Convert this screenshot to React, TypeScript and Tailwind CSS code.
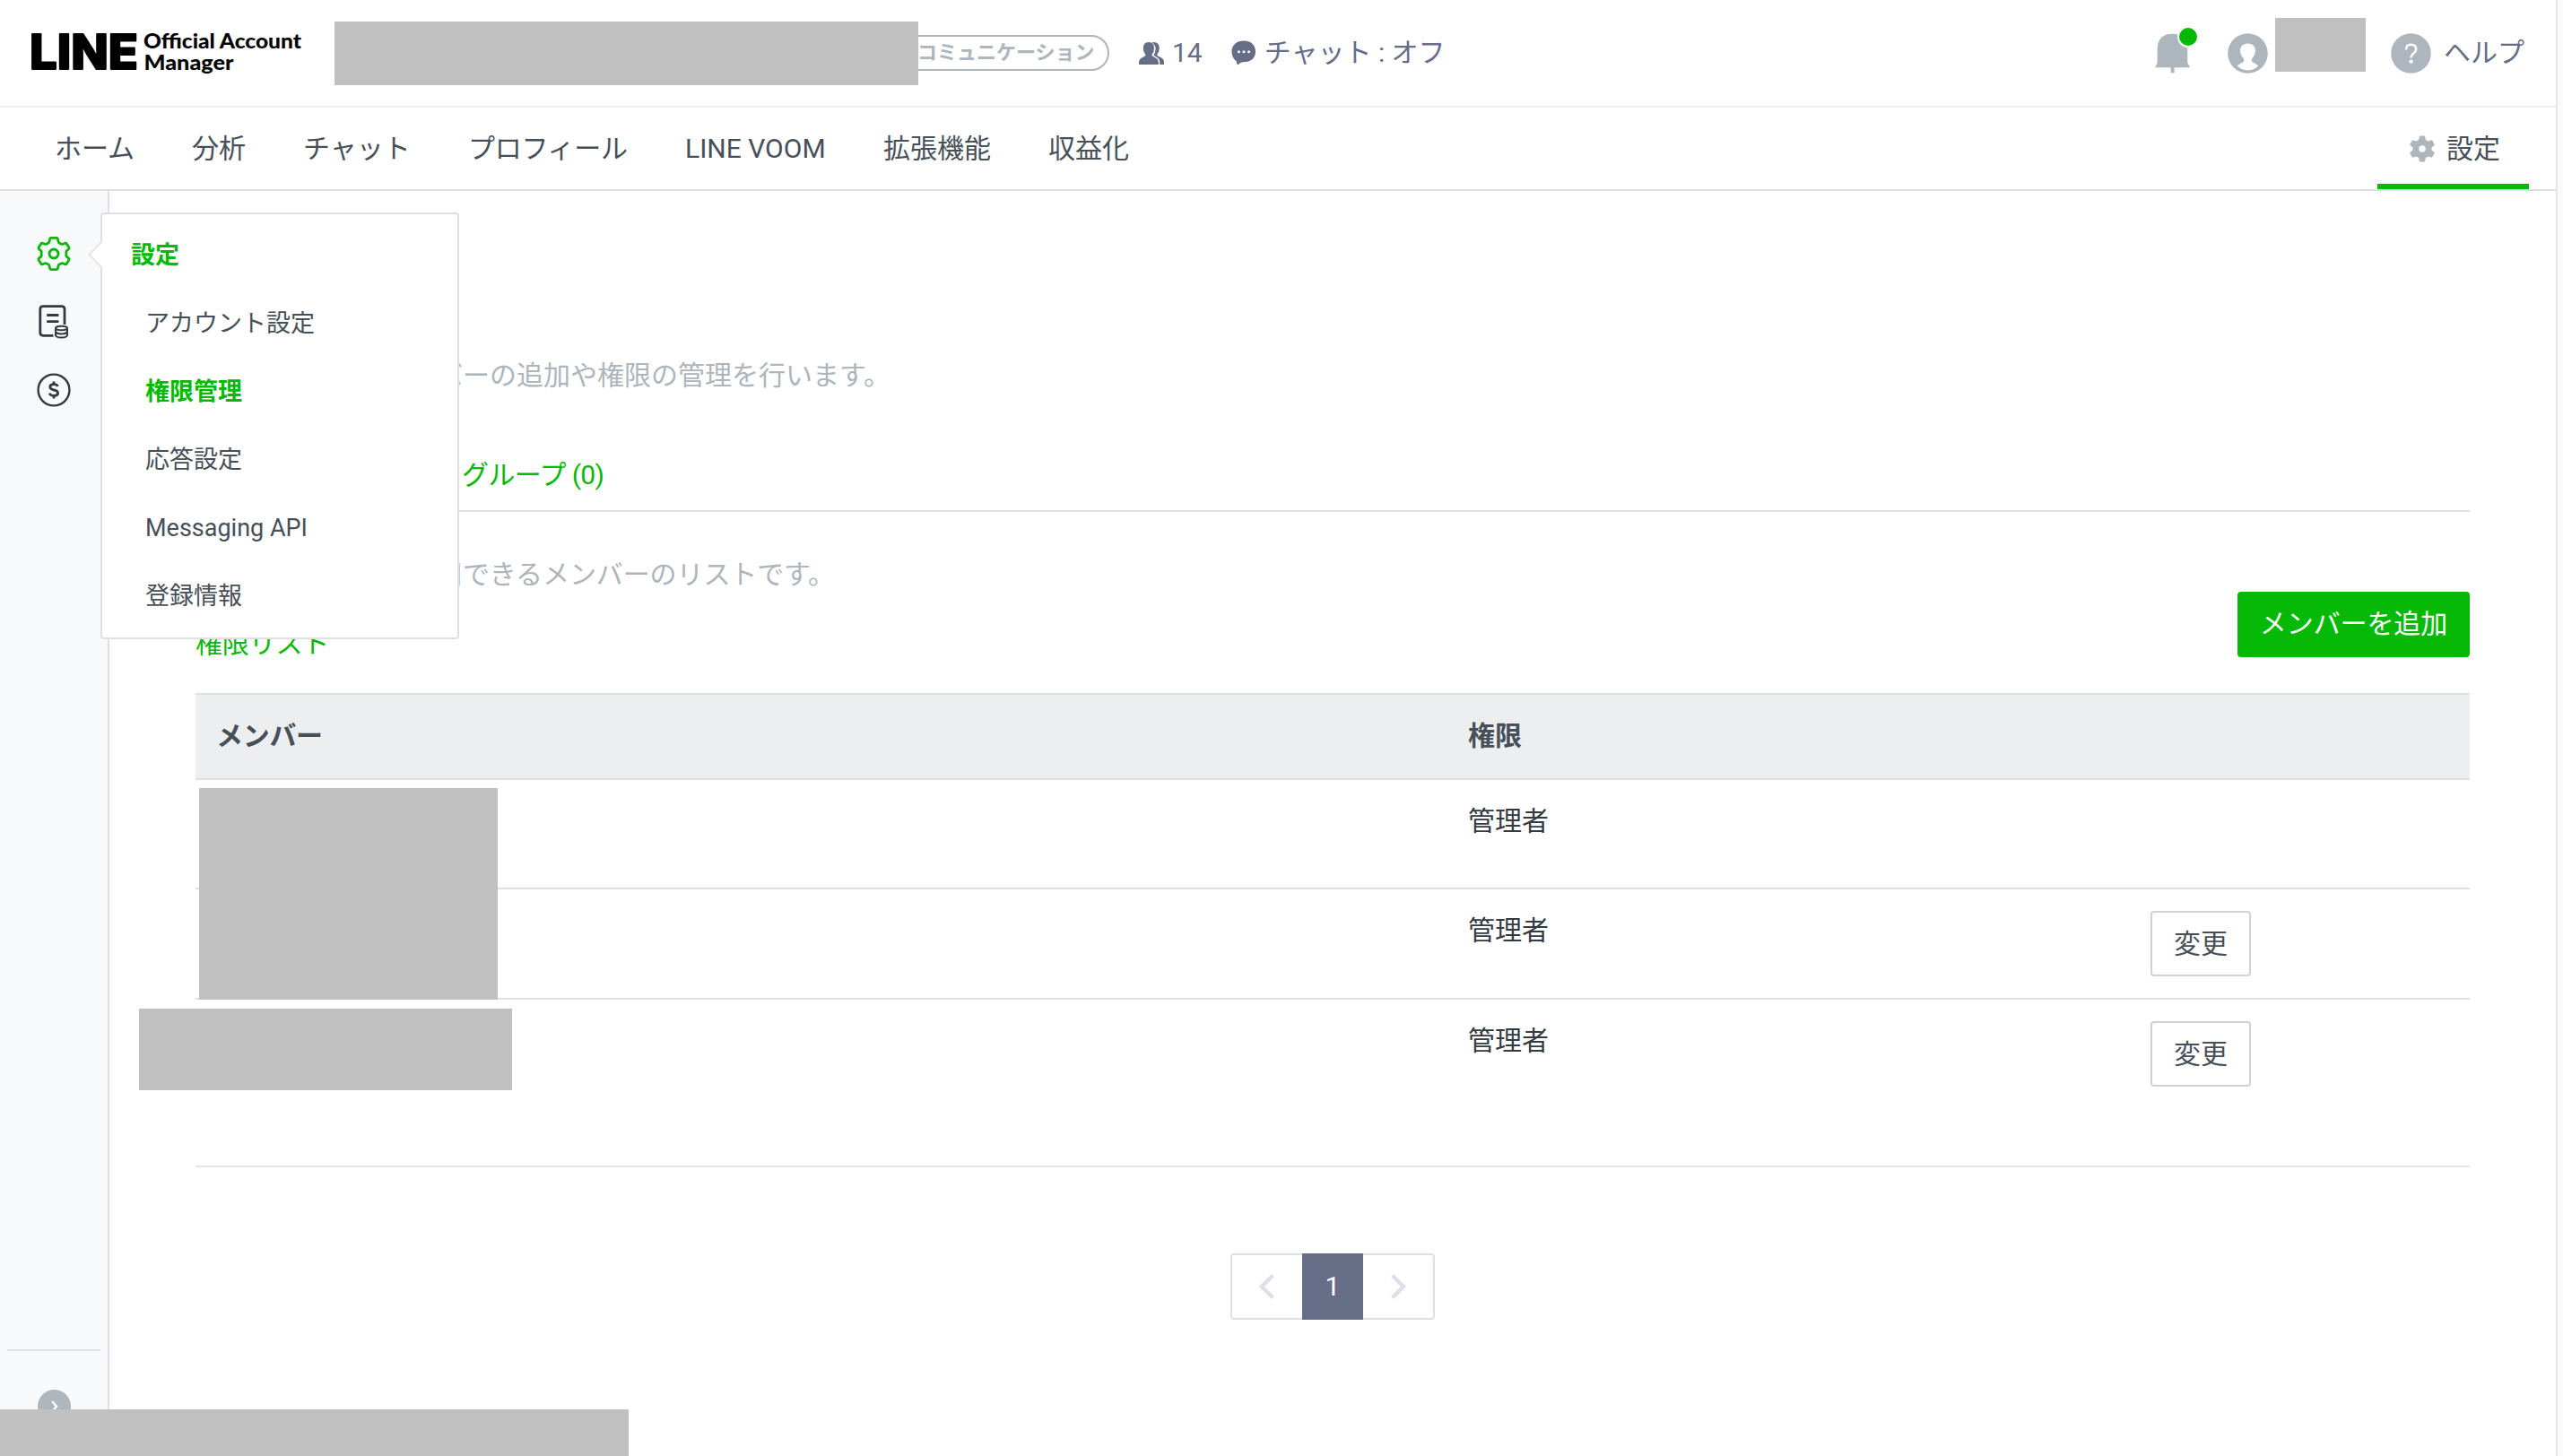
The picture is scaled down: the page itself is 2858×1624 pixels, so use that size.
interface NavItem {
  label: string
  width: string
}

const NAV_ITEMS: NavItem[] = [
  { label: 'ホーム', width: 'w-[153px]' },
  { label: '分析', width: 'w-[124px]' },
  { label: 'チャット', width: 'w-[184px]' },
  { label: 'プロフィール', width: 'w-[242px] tracking-[-0.3px]' },
  { label: 'LINE VOOM', width: 'w-[221px]' },
  { label: '拡張機能', width: 'w-[184px]' },
  { label: '収益化', width: 'w-[154px]' },
]

interface MenuItem {
  label: string
  active?: boolean
}

const MENU_ITEMS: MenuItem[] = [
  { label: 'アカウント設定' },
  { label: '権限管理', active: true },
  { label: '応答設定' },
  { label: 'Messaging API' },
  { label: '登録情報' },
]

const MEMBERS = [
  { id: 1, role: '管理者', editable: false, height: 'h-[122px]' },
  { id: 2, role: '管理者', editable: true, height: 'h-[123px]' },
  { id: 3, role: '管理者', editable: true, height: 'h-[187px]' },
]

const GEAR_PATH =
  'M-3.2-17.6H3.2Q4.2-17.6 4.4-16.6L5-13.4Q5.2-12.4 6-12L8-10.9Q9-10.3 10-10.7L12.6-11.8Q13.6-12.2 14.2-11.3L16.9-7Q17.4-6 16.6-5.2L14.4-3.4Q13.8-2.8 13.8-2V2Q13.8 2.8 14.4 3.4L16.6 5.2Q17.4 6 16.9 7L14.2 11.3Q13.6 12.2 12.6 11.8L10 10.7Q9 10.3 8 10.9L6 12Q5.2 12.4 5 13.4L4.4 16.6Q4.2 17.6 3.2 17.6H-3.2Q-4.2 17.6-4.4 16.6L-5 13.4Q-5.2 12.4-6 12L-8 10.9Q-9 10.3-10 10.7L-12.6 11.8Q-13.6 12.2-14.2 11.3L-16.9 7Q-17.4 6-16.6 5.2L-14.4 3.4Q-13.8 2.8-13.8 2V-2Q-13.8-2.8-14.4-3.4L-16.6-5.2Q-17.4-6-16.9-7L-14.2-11.3Q-13.6-12.2-12.6-11.8L-10-10.7Q-9-10.3-8-10.9L-6-12Q-5.2-12.4-5-13.4L-4.4-16.6Q-4.2-17.6-3.2-17.6Z'

const Logo = () => (
  <svg className="h-[64px] w-[309px] shrink-0 overflow-visible" viewBox="29 27 309 64">
    <text
      x="33"
      y="77"
      fontFamily="Inter, sans-serif"
      fontWeight="800"
      fontSize="54"
      textLength="121"
      lengthAdjust="spacingAndGlyphs"
      stroke="#000"
      strokeWidth="2"
      strokeLinejoin="round"
    >
      LINE
    </text>
    <text x="160" y="53.5" fontFamily="Lato, sans-serif" fontWeight="900" fontSize="23" textLength="176" lengthAdjust="spacingAndGlyphs">
      Official Account
    </text>
    <text x="160.5" y="77.5" fontFamily="Lato, sans-serif" fontWeight="900" fontSize="23" textLength="100" lengthAdjust="spacingAndGlyphs">
      Manager
    </text>
  </svg>
)

const GearOutline = () => (
  <svg className="h-[42px] w-[42px]" viewBox="-21 -21 42 42" fill="none" stroke="#06b906" strokeWidth="2.8">
    <path d={GEAR_PATH} strokeLinejoin="round" />
    <circle r="5" />
  </svg>
)

const GearSolid = () => (
  <svg className="h-[30px] w-[28px]" viewBox="-14 -15 28 30">
    <path
      transform="scale(.8)"
      fill="#adb5bd"
      fillRule="evenodd"
      d="M-2.6-18H2.6Q3.8-18 4-17L4.8-12.6L8.4-10.6L12.4-12Q13.6-12.3 14.2-11.4L17-6.6Q17.5-5.6 16.6-4.8L13.2-2V2L16.6 4.8Q17.5 5.6 17 6.6L14.2 11.4Q13.6 12.3 12.4 12L8.4 10.6L4.8 12.6L4 17Q3.8 18 2.6 18H-2.6Q-3.8 18-4 17L-4.8 12.6L-8.4 10.6L-12.4 12Q-13.6 12.3-14.2 11.4L-17 6.6Q-17.5 5.6-16.6 4.8L-13.2 2V-2L-16.6-4.8Q-17.5-5.6-17-6.6L-14.2-11.4Q-13.6-12.3-12.4-12L-8.4-10.6L-4.8-12.6L-4-17Q-3.8-18-2.6-18ZM0-4.7A4.7 4.7 0 1 0 0 4.7A4.7 4.7 0 1 0 0-4.7Z"
    />
  </svg>
)

const InvoiceIcon = () => (
  <svg className="h-[42px] w-[42px]" viewBox="0 0 42 42" fill="none" stroke="#343a42" strokeWidth="2.8">
    <path d="M20.5 36.3H9Q5.8 36.3 5.8 33.1V6.9Q5.8 3.7 9 3.7H29.8Q33 3.7 33 6.9V24" />
    <path d="M13.2 13.5H26.4M13.2 20.6H26.4" />
    <g strokeWidth="2">
      <ellipse cx="29.5" cy="28" rx="6.5" ry="2.3" />
      <path d="M23 28V36Q24 38.6 29.5 38.6T36 36V28M23 32Q24 34.4 29.5 34.4T36 32" />
    </g>
  </svg>
)

const DollarIcon = () => (
  <svg className="h-[42px] w-[42px]" viewBox="0 0 42 42" fill="none" stroke="#343a42" strokeWidth="2.4">
    <circle cx="21" cy="21" r="17.4" />
    <path d="M25.4 17Q24.6 14.6 21 14.6Q16.8 14.6 16.8 17.6Q16.8 20.2 21 21Q25.6 21.8 25.6 24.6Q25.6 27.4 21.2 27.4Q17.2 27.4 16.2 24.6M21 11.6V15M21 27V30.5" strokeWidth="2.8" />
  </svg>
)

const FriendsIcon = () => (
  <svg className="h-[26px] w-[30px]" viewBox="0 0 30 26" fill="#656d87">
    <path d="M15.4 1.6Q16.2 1 17.4 1Q23.8 1 23.8 8Q23.8 12 21.4 14.2V16L26.6 18.8Q29 20 29 23V26H24.2V23.4Q24.2 19.8 21.4 18.2L17.4 15.8Q19.6 12.4 19.6 8.4Q19.6 4 15.4 1.6Z" />
    <path d="M12 1Q18 1 18 8Q18 12 15.6 14.4V16.2L20.4 19Q22.8 20.4 22.8 23.4V26H1V23.4Q1 20.4 3.4 19L8.2 16.2V14.4Q5.8 12 5.8 8Q5.8 1 12 1Z" />
  </svg>
)

const ChatIcon = () => (
  <svg className="h-[28px] w-[28px]" viewBox="0 0 28 28" fill="#656d87">
    <path d="M14 .5C21.8 .5 27 5 27 12.4S21.8 24.2 13.4 24.2C11 24.4 9.6 25 7.6 27.4C6.4 26.6 6 25 5.6 23C2.4 20.8 .5 17.2 .5 12.4C.5 5 6.2 .5 14 .5Z" />
    <g fill="#fff">
      <circle cx="8.4" cy="12.8" r="1.5" />
      <circle cx="14" cy="12.8" r="1.5" />
      <circle cx="19.6" cy="12.8" r="1.5" />
    </g>
  </svg>
)

const BellIcon = () => (
  <svg className="h-[54px] w-[50px]" viewBox="2402 29 50 54">
    <path d="M2406 70V55Q2406 38 2422.5 38T2439 55V70L2441.6 75H2424.2V81H2421V75H2403.6Z" fill="#adb5bd" stroke="#adb5bd" strokeWidth=".6" strokeLinejoin="round" />
    <circle cx="2440" cy="41" r="12" fill="#fff" />
    <circle cx="2440" cy="41" r="10" fill="#06b906" />
  </svg>
)

const AvatarIcon = () => (
  <svg className="h-[45px] w-[45px]" viewBox="0 0 45 45">
    <circle cx="22.5" cy="22.5" r="22.3" fill="#adb5bd" />
    <path d="M22.5 11.5C28 11.5 31 15 31 20Q30.6 25 27 28.4Q26 31 28 32.2L34.4 36.2Q29.4 41.4 22.5 41.4T10.6 36.2L17 32.2Q19 31 18 28.4Q14.4 25 14 20C14 15 17 11.5 22.5 11.5Z" fill="#fff" />
  </svg>
)

const HelpIcon = () => (
  <svg className="h-[45px] w-[45px]" viewBox="0 0 45 45">
    <circle cx="22.5" cy="22.5" r="22.3" fill="#adb5bd" />
    <path d="M17 18.5Q17 12.8 22.6 12.8T28.2 18Q28.2 20.4 25.4 22.4T22.6 27.4" fill="none" stroke="#fff" strokeWidth="2.5" />
    <circle cx="22.6" cy="31.6" r="2.2" fill="#fff" />
  </svg>
)

// Covers private account names
const Mask = ({ className }: { className: string }) => <div className={`bg-[#c0c0c0] ${className}`} />

const Header = () => (
  <header className="flex h-[120px] shrink-0 items-center border-b-2 border-[#eeeff0] pl-[29px] pr-[35px] text-[30px] leading-[44px] text-[#656d87]">
    <Logo />
    <Mask className="relative z-10 ml-[35px] h-[71px] w-[651px] shrink-0" />
    <span className="-ml-5 flex h-[40px] w-[233px] items-center rounded-full border-2 border-[#adb5bd] pl-[17px] text-[22px] font-bold leading-[36px] whitespace-nowrap text-[#adb5bd]">
      コミュニケーション
    </span>
    <div className="ml-8 flex items-center">
      <FriendsIcon />
      <span className="ml-[8px]">14</span>
    </div>
    <div className="ml-[32px] flex items-center whitespace-nowrap">
      <ChatIcon />
      <span className="ml-[9px]">チャット : オフ</span>
    </div>
    <div className="ml-auto flex items-center">
      <span className="-mt-[7px]">
        <BellIcon />
      </span>
      <span className="ml-[32px]">
        <AvatarIcon />
      </span>
      <Mask className="-mt-[18px] ml-[8px] h-[60px] w-[101px]" />
      <span className="ml-[28px]">
        <HelpIcon />
      </span>
      <span className="ml-[14px] whitespace-nowrap">ヘルプ</span>
    </div>
  </header>
)

const NavBar = () => (
  <nav className="flex h-[93px] shrink-0 items-stretch border-b-2 border-[#dde0e5] pl-[29px] pr-[30px] text-[30px] leading-[91px] text-[#474f59]">
    {NAV_ITEMS.map((item) => (
      <a key={item.label} className={`shrink-0 whitespace-nowrap pl-8 ${item.width}`}>
        {item.label}
      </a>
    ))}
    <a className="relative ml-auto flex h-[91px] w-[169px] items-center pl-[36px] whitespace-nowrap">
      <GearSolid />
      <span className="ml-[13px]">設定</span>
      <span className="absolute inset-x-0 bottom-0 h-[6px] bg-[#06b906]" />
    </a>
  </nav>
)

const SideMenu = () => (
  <div className="absolute left-[112px] top-[24px] z-20 h-[476px] w-[400px] rounded border-2 border-[#dfdfdf] bg-white pt-[8px] text-[27px] text-[#474f59]">
    <svg className="absolute -left-[16px] top-[28px] h-[34px] w-[18px]" viewBox="0 0 18 34">
      <path d="M17 2L2 17L17 32H18V2Z" fill="#fff" />
      <path d="M15.5 2.5L1.5 17L15.5 31.5" fill="none" stroke="#dfdfdf" strokeWidth="1.6" />
    </svg>
    <p className="pl-[32px] font-bold leading-[76px] text-[#06b906]">設定</p>
    {MENU_ITEMS.map((item) => (
      <p key={item.label} className={`pl-[48px] leading-[76px] ${item.active ? 'font-bold text-[#06b906]' : ''}`}>
        {item.label}
      </p>
    ))}
  </div>
)

const Sidebar = () => (
  <aside className="relative flex w-[122px] shrink-0 flex-col items-center border-r-2 border-[#dde0e5] bg-[#f7f9fb] pt-[49px]">
    <div className="flex flex-col items-center gap-[34px]">
      <GearOutline />
      <InvoiceIcon />
      <DollarIcon />
    </div>
    <div className="mt-auto mb-[37px] flex w-full flex-col items-center">
      <div className="h-[2px] w-[104px] bg-[#dde0e5]" />
      <svg className="mt-[43px] h-[37px] w-[37px]" viewBox="0 0 37 37">
        <circle cx="18.5" cy="18.5" r="18.5" fill="#adb5bd" />
        <path d="M16.2 13L21 18.7L16.2 24.4" fill="none" stroke="#fff" strokeWidth="2.5" />
      </svg>
    </div>
    <SideMenu />
  </aside>
)

const MemberTable = () => (
  <div className="relative mt-[40px] text-[30px] leading-[44px]">
    <div className="flex h-[97px] items-center border-y-2 border-[#dde0e5] bg-[#eceef0] font-bold text-[#474f59]">
      <span className="-mt-[2px] w-[1419px] pl-[23px] tracking-[-0.3px]">メンバー</span>
      <span className="-mt-px">権限</span>
    </div>
    {MEMBERS.map((member, i) => (
      <div
        key={member.id}
        className={`flex border-b-2 pt-6 text-[#343a42] ${member.height} ${i === MEMBERS.length - 1 ? 'border-[#e4e5e7]' : 'border-[#dde0e5]'}`}
      >
        <span className="w-[1419px]" />
        <span className="w-[761px]">{member.role}</span>
        {member.editable && (
          <button className="h-[73px] w-[112px] rounded border-2 border-[#ced2d9] text-[#474f59]">変更</button>
        )}
      </div>
    ))}
    <Mask className="absolute left-1 top-[106px] h-[236px] w-[333px]" />
    <Mask className="absolute -left-[63px] top-[352px] h-[91px] w-[416px]" />
  </div>
)

const Pagination = () => (
  <div className="mx-auto mt-[96px] flex h-[74px] w-[228px] rounded border-2 border-[#dde0e5]">
    <button className="flex w-[78px] items-center justify-center">
      <svg className="h-[30px] w-[20px]" viewBox="0 0 20 30" fill="none" stroke="#dde0e6" strokeWidth="4.4">
        <path d="M16.5 2.5L4 15L16.5 27.5" />
      </svg>
    </button>
    <button className="-my-[2px] w-[68px] bg-[#666d86] text-[30px] leading-[74px] text-white">1</button>
    <button className="flex w-[78px] items-center justify-center">
      <svg className="h-[30px] w-[20px]" viewBox="0 0 20 30" fill="none" stroke="#dde0e6" strokeWidth="4.4">
        <path d="M3.5 2.5L16 15L3.5 27.5" />
      </svg>
    </button>
  </div>
)

export default function App() {
  return (
    <div className="relative flex h-[1624px] w-[2858px] overflow-hidden bg-[#fafafa] font-['Roboto','Noto_Sans_CJK_JP',sans-serif]">
      <div className="flex w-[2852px] flex-col border-r-2 border-[#e7e7e7] bg-white">
        <Header />
        <NavBar />
        <div className="flex min-h-0 flex-1">
          <Sidebar />
          <main className="min-w-0 flex-1 px-[96px] pt-[183px] text-[30px] leading-[45px]">
            <p className="pl-[268px] text-[#adb5bd]">バーの追加や権限の管理を行います。</p>
            <div className="mt-[66px] flex h-[64px] border-b-2 border-[#dde0e5] pl-[297px] text-[#06b906]">
              <span className="tracking-[-0.6px]">グループ (0)</span>
            </div>
            <p className="mt-[47px] pl-[268px] tracking-[-0.1px] text-[#adb5bd]">用できるメンバーのリストです。</p>
            <div className="-mt-[3px] flex h-[73px] items-end justify-between">
              <span className="leading-[30px] tracking-[-0.2px] text-[#06b906]">権限リスト</span>
              <button className="h-[73px] w-[259px] rounded bg-[#06b906] pb-[2px] tracking-[-0.1px] text-white">メンバーを追加</button>
            </div>
            <MemberTable />
            <Pagination />
          </main>
        </div>
      </div>
      <Mask className="absolute bottom-0 left-0 z-30 h-[52px] w-[701px]" />
    </div>
  )
}
